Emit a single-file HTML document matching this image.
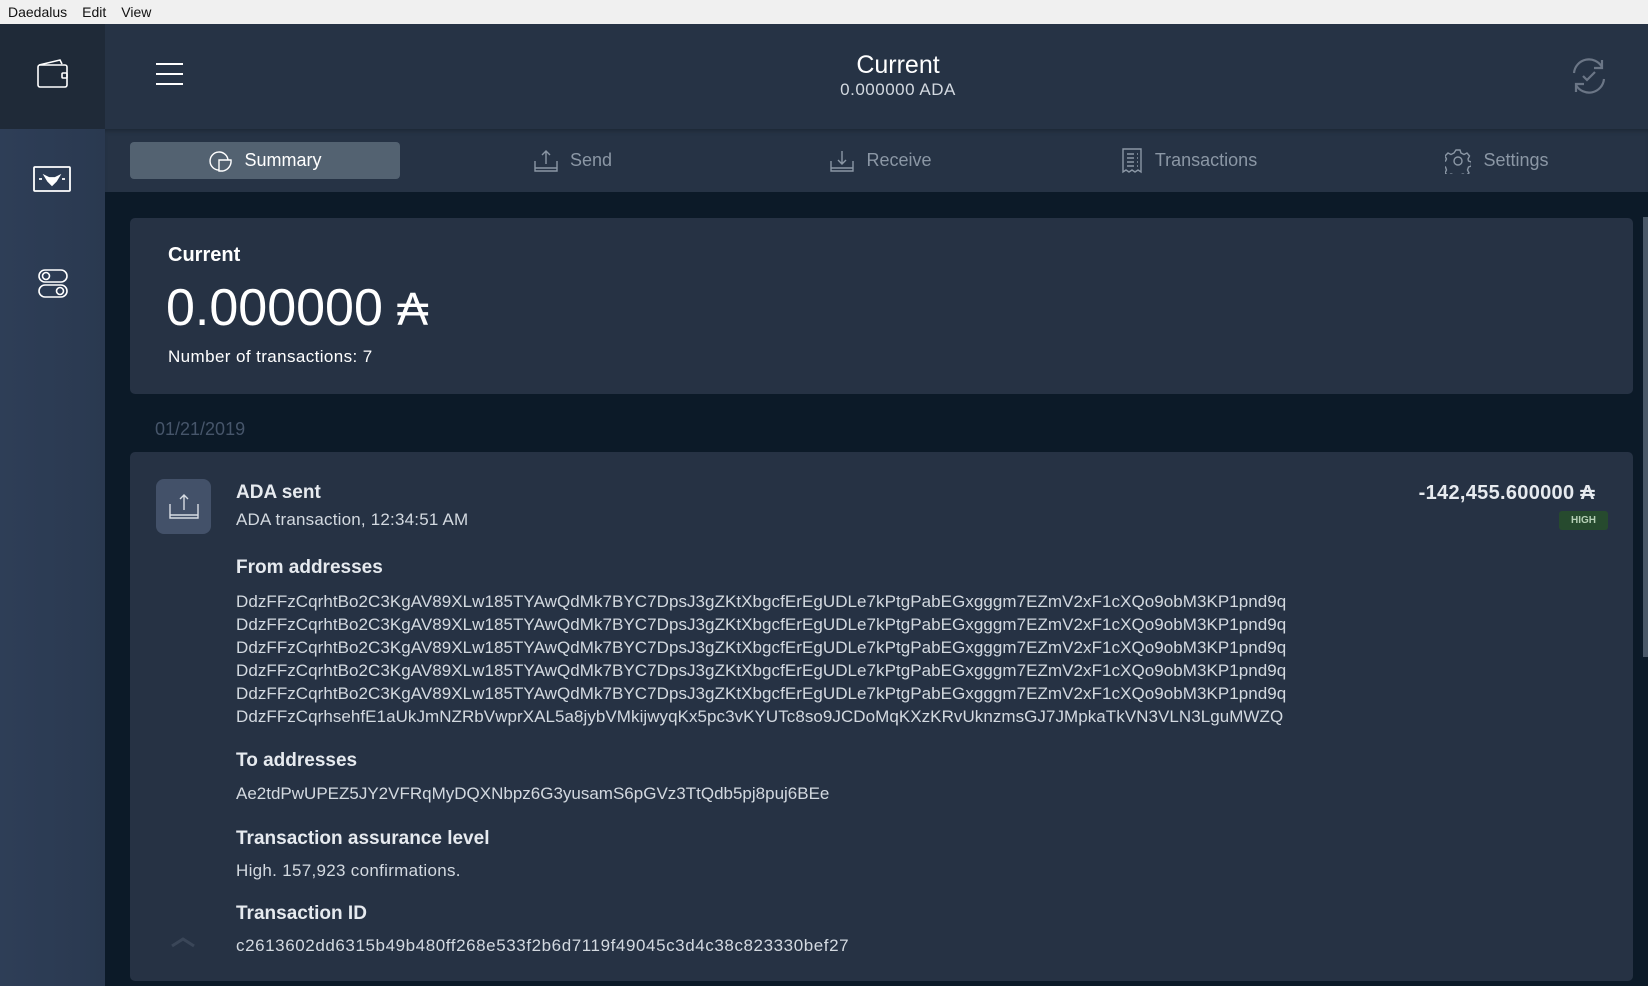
<!DOCTYPE html>
<html><head><meta charset="utf-8"><style>
*{margin:0;padding:0;box-sizing:border-box}
body{width:1648px;height:986px;overflow:hidden;background:#0c1a28;font-family:"Liberation Sans","DejaVu Sans",sans-serif;position:relative;color:#e6eaef}
.a{position:absolute;white-space:nowrap}
.menu{left:0;top:0;width:1648px;height:24px;background:#f0f0f0;color:#111;font-size:14px;line-height:24px}
.side{left:0;top:24px;width:105px;height:962px;background:linear-gradient(90deg,#2e3e57,#2a3950)}
.sidetop{left:0;top:24px;width:105px;height:105px;background:#1f2a38}
.hdr{left:105px;top:24px;width:1543px;height:105px;background:#263345}
.tabs{left:105px;top:129px;width:1543px;height:63px;background:#263345;box-shadow:inset 0 4px 4px -2px #1d2836}
.card{background:#263244;border-radius:5px}
.tab{top:142px;height:37px;width:270px;display:flex;align-items:center;justify-content:center;gap:12px;font-size:18px;color:#8b97a5}
.lbl{font-weight:bold;font-size:19px;color:#e6eaef;line-height:24px}
.txt{font-size:17px;color:#d3d9e0;line-height:23px;letter-spacing:.05px}
</style></head><body>
<div class="a menu"><span style="margin-left:8px">Daedalus</span><span style="margin-left:15px">Edit</span><span style="margin-left:15px">View</span></div>
<div class="a side"></div>
<div class="a sidetop"></div>
<svg class="a" style="left:36px;top:58px" width="34" height="32" viewBox="0 0 34 32" fill="none" stroke="#fff" stroke-width="1.6"><rect x="2" y="7" width="29" height="22" rx="2"/><path d="M3 7 L24 2 L26 6"/><rect x="26" y="15" width="5" height="5" rx="1"/></svg>
<svg class="a" style="left:32px;top:165px" width="40" height="28" viewBox="0 0 40 28" fill="none" stroke="#fff" stroke-width="1.8"><rect x="2" y="2" width="36" height="24" rx="1"/><path d="M7 14h3M30 14h3"/><path d="M13 11l4 2h6l4-2-3 5-4 4-4-4z" fill="#fff"/></svg>
<svg class="a" style="left:37px;top:268px" width="32" height="32" viewBox="0 0 32 32" fill="none" stroke="#fff" stroke-width="1.6"><rect x="2" y="2" width="28" height="12" rx="6"/><circle cx="9" cy="8" r="3.5"/><rect x="2" y="17" width="28" height="12" rx="6"/><circle cx="23" cy="23" r="3.5"/></svg>
<div class="a hdr"></div>
<div class="a" style="left:156px;top:63px;width:27px;height:2px;background:#fff"></div>
<div class="a" style="left:156px;top:73px;width:27px;height:2px;background:#fff"></div>
<div class="a" style="left:156px;top:83px;width:27px;height:2px;background:#fff"></div>
<div class="a" style="left:698px;width:400px;top:50px;text-align:center;font-size:25px;line-height:30px;color:#fff">Current</div>
<div class="a" style="left:698px;width:400px;top:80px;text-align:center;font-size:17px;line-height:20px;color:#d3d9e0;letter-spacing:.5px">0.000000 ADA</div>
<svg class="a" style="left:1568px;top:55px" width="42" height="42" viewBox="0 0 42 42" fill="none" stroke="#6b7686" stroke-width="2.2"><path d="M6 18a15 15 0 0 1 28-6"/><path d="M34 5v8h-8"/><path d="M36 24a15 15 0 0 1-28 6"/><path d="M8 37v-8h8"/><path d="M15 21l4 4 8-8"/></svg>
<div class="a tabs"></div>
<div class="a" style="left:130px;top:142px;width:270px;height:37px;background:#536271;border-radius:4px"></div>
<div class="a tab" style="left:130px;color:#fff"><svg width="24" height="24" viewBox="0 0 24 24" fill="none" stroke="#fff" stroke-width="1.4"><path d="M11 21a9 9 0 1 1 9-10"/><path d="M11 11h12a10 10 0 0 1-8 11h-4z"/></svg>Summary</div>
<div class="a tab" style="left:438px"><svg width="24" height="24" viewBox="0 0 24 24" fill="none" stroke="#8b97a5" stroke-width="1.4"><path d="M1 12v10h22V12M1 19h22M12 15V2M8 6l4-4 4 4"/></svg>Send</div>
<div class="a tab" style="left:746px"><svg width="24" height="24" viewBox="0 0 24 24" fill="none" stroke="#8b97a5" stroke-width="1.4"><path d="M1 12v10h22V12M1 19h22M12 2v13M8 11l4 4 4-4"/></svg>Receive</div>
<div class="a tab" style="left:1054px"><svg width="22" height="26" viewBox="0 0 22 26" fill="none" stroke="#8b97a5" stroke-width="1.4"><path d="M2 1h18v23l-3-2-3 2-3-2-3 2-3-2-3 2z"/><path d="M6 6h7M6 10h7M6 14h7M6 18h7M16 6h1M16 10h1M16 14h1M16 18h1"/></svg>Transactions</div>
<div class="a tab" style="left:1362px"><svg width="26" height="26" viewBox="0 0 26 26" fill="none" stroke="#8b97a5" stroke-width="1.4"><circle cx="13" cy="13" r="4"/><path d="M11 2h4l1 3 3 1.5 3-1.5 2.5 3-1.5 3 .5 2 3 1v4l-3 1-1 3 1.5 3-3 2.5-3-1.5-3 1-1 3h-4l-1-3-3-1-3 1.5-3-2.5 1.5-3-1-3-3-1v-4l3-1 1-2-1.5-3 3-3 3 1.5 3-1.5z"/></svg>Settings</div>
<div class="a" style="left:1643px;top:217px;width:5px;height:440px;background:#4a5868"></div>
<div class="a card" style="left:130px;top:218px;width:1503px;height:176px"></div>
<div class="a" style="left:168px;top:243px;font-weight:bold;font-size:20px;line-height:24px;color:#fff">Current</div>
<div class="a" style="left:166px;top:278px;font-size:52px;line-height:60px;color:#fff;font-weight:300">0.000000 <span style="font-size:46px">₳</span></div>
<div class="a" style="left:168px;top:346px;font-size:17px;line-height:22px;color:#fff;letter-spacing:.4px">Number of transactions: 7</div>
<div class="a" style="left:155px;top:418px;font-size:18px;line-height:22px;color:#46556a">01/21/2019</div>
<div class="a card" style="left:130px;top:452px;width:1503px;height:529px"></div>
<div class="a" style="left:156px;top:479px;width:55px;height:55px;background:#435169;border-radius:8px"></div>
<svg class="a" style="left:168px;top:490px" width="32" height="32" viewBox="0 0 32 32" fill="none" stroke="#d8dde4" stroke-width="1.4"><path d="M2 14v14h28V14M2 25h28M16 20V5M12 9l4-4 4 4"/></svg>
<div class="a lbl" style="left:236px;top:481px">ADA sent</div>
<div class="a txt" style="left:236px;top:508px;letter-spacing:.2px">ADA transaction, 12:34:51 AM</div>
<div class="a lbl" style="left:1200px;width:395px;top:481px;text-align:right;font-size:20px;letter-spacing:.3px">-142,455.600000 ₳</div>
<div class="a" style="left:1559px;top:511px;width:49px;height:19px;background:#264a2e;border-radius:3px;color:#b5cfb5;font-size:10px;font-weight:bold;text-align:center;line-height:19px">HIGH</div>
<div class="a lbl" style="left:236px;top:556px">From addresses</div>
<div class="a txt" style="left:236px;top:590px">DdzFFzCqrhtBo2C3KgAV89XLw185TYAwQdMk7BYC7DpsJ3gZKtXbgcfErEgUDLe7kPtgPabEGxgggm7EZmV2xF1cXQo9obM3KP1pnd9q<br>DdzFFzCqrhtBo2C3KgAV89XLw185TYAwQdMk7BYC7DpsJ3gZKtXbgcfErEgUDLe7kPtgPabEGxgggm7EZmV2xF1cXQo9obM3KP1pnd9q<br>DdzFFzCqrhtBo2C3KgAV89XLw185TYAwQdMk7BYC7DpsJ3gZKtXbgcfErEgUDLe7kPtgPabEGxgggm7EZmV2xF1cXQo9obM3KP1pnd9q<br>DdzFFzCqrhtBo2C3KgAV89XLw185TYAwQdMk7BYC7DpsJ3gZKtXbgcfErEgUDLe7kPtgPabEGxgggm7EZmV2xF1cXQo9obM3KP1pnd9q<br>DdzFFzCqrhtBo2C3KgAV89XLw185TYAwQdMk7BYC7DpsJ3gZKtXbgcfErEgUDLe7kPtgPabEGxgggm7EZmV2xF1cXQo9obM3KP1pnd9q<br>DdzFFzCqrhsehfE1aUkJmNZRbVwprXAL5a8jybVMkijwyqKx5pc3vKYUTc8so9JCDoMqKXzKRvUknzmsGJ7JMpkaTkVN3VLN3LguMWZQ</div>
<div class="a lbl" style="left:236px;top:749px">To addresses</div>
<div class="a txt" style="left:236px;top:782px;letter-spacing:0">Ae2tdPwUPEZ5JY2VFRqMyDQXNbpz6G3yusamS6pGVz3TtQdb5pj8puj6BEe</div>
<div class="a lbl" style="left:236px;top:827px">Transaction assurance level</div>
<div class="a txt" style="left:236px;top:859px;letter-spacing:.3px">High. 157,923 confirmations.</div>
<div class="a lbl" style="left:236px;top:902px">Transaction ID</div>
<div class="a txt" style="left:236px;top:934px;letter-spacing:.58px">c2613602dd6315b49b480ff268e533f2b6d7119f49045c3d4c38c823330bef27</div>
<svg class="a" style="left:170px;top:936px" width="26" height="12" viewBox="0 0 26 12" fill="none" stroke="#3a4658" stroke-width="3"><path d="M2 10l11-7 11 7"/></svg>
</body></html>
